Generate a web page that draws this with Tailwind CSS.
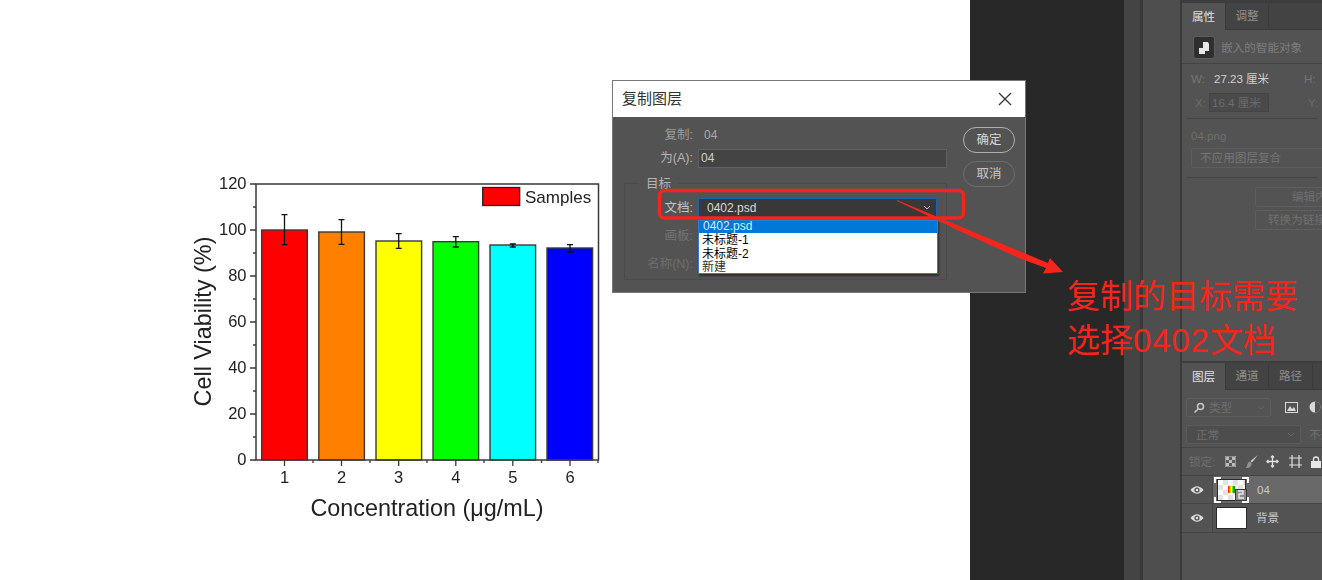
<!DOCTYPE html>
<html lang="zh">
<head>
<meta charset="utf-8">
<script src="https://cdn.jsdelivr.net/npm/@tailwindcss/browser@4"></script>
<title>复制图层</title>
</head>
<body class="m-0 bg-white">
<div class="relative flex w-[1322px] h-[580px] overflow-hidden font-['Liberation_Sans','Noto_Sans_CJK_SC',sans-serif] text-[11.6px]">

  <!-- document canvas with the chart -->
  <div class="w-[970px] h-full bg-white shrink-0">
    <svg width="970" height="580" viewBox="0 0 970 580" class="block blur-[0.4px]" font-family="Liberation Sans, Arial, sans-serif" fill="#222">
      <g stroke="#3a3a3a" stroke-width="1.4">
        <rect x="261.7" y="230" width="45.6" height="230" fill="#ff0000"/>
        <rect x="318.8" y="232" width="45.6" height="228" fill="#ff8000"/>
        <rect x="376" y="241" width="45.6" height="219" fill="#ffff00"/>
        <rect x="433" y="241.7" width="45.6" height="218.3" fill="#00ff00"/>
        <rect x="490" y="245" width="45.6" height="215" fill="#00ffff"/>
        <rect x="547" y="248" width="45.6" height="212" fill="#0000ff"/>
      </g>
      <g stroke="#111" stroke-width="1.3" fill="none">
        <path d="M284.5 214.7V244.7M281.5 214.7H287.5M281.5 244.7H287.5"/>
        <path d="M341.5 219.7V244.3M338.5 219.7H344.5M338.5 244.3H344.5"/>
        <path d="M398.7 233.7V248.3M395.7 233.7H401.7M395.7 248.3H401.7"/>
        <path d="M455.8 236.7V247M452.8 236.7H458.8M452.8 247H458.8"/>
        <path d="M512.8 244V247M509.8 244H515.8M509.8 247H515.8"/>
        <path d="M570 244.7V252M567 244.7H573M567 252H573"/>
      </g>
      <rect x="256" y="184" width="342.5" height="276" fill="none" stroke="#3a3a3a" stroke-width="1.5"/>
      <path d="M250 184H256M250 230H256M250 276H256M250 322H256M250 368H256M250 414H256M250 460H256M253 207H256M253 253H256M253 299H256M253 345H256M253 391H256M253 437H256" stroke="#3a3a3a" stroke-width="1.3" fill="none"/>
      <path d="M284.5 460V466M341.5 460V466M398.7 460V466M455.8 460V466M512.8 460V466M570 460V466M313 460V463M370 460V463M427 460V463M484 460V463M541.5 460V463M598 460V463" stroke="#3a3a3a" stroke-width="1.3" fill="none"/>
      <g font-size="16.5" text-anchor="end">
        <text x="246.5" y="188.5">120</text>
        <text x="246.5" y="234.5">100</text>
        <text x="246.5" y="280.5">80</text>
        <text x="246.5" y="326.5">60</text>
        <text x="246.5" y="372.5">40</text>
        <text x="246.5" y="418.5">20</text>
        <text x="246.5" y="464.5">0</text>
      </g>
      <g font-size="16.5" text-anchor="middle">
        <text x="284.5" y="483">1</text>
        <text x="341.5" y="483">2</text>
        <text x="398.7" y="483">3</text>
        <text x="455.8" y="483">4</text>
        <text x="512.8" y="483">5</text>
        <text x="570" y="483">6</text>
      </g>
      <rect x="482.7" y="187.5" width="37" height="18" fill="#ff0000" stroke="#222" stroke-width="1.3"/>
      <text x="525" y="202.5" font-size="17">Samples</text>
      <text x="427" y="516" font-size="23.4" text-anchor="middle">Concentration (μg/mL)</text>
      <text transform="translate(211 321.5) rotate(-90)" font-size="23.4" text-anchor="middle">Cell Viability (%)</text>
    </svg>
  </div>

  <!-- Photoshop workspace -->
  <div class="w-[154px] h-full bg-[#282828] shrink-0"></div>
  <div class="w-[16px] h-full bg-[#444444] shrink-0"></div>
  <div class="w-[3px] h-full bg-[#393939] shrink-0"></div>
  <div class="w-[37px] h-full bg-[#4e4e4e] shrink-0"></div>
  <div class="w-[2px] h-full bg-[#3b3b3b] shrink-0"></div>

  <!-- right panels -->
  <div class="w-[140px] h-full shrink-0 bg-[#535353] flex flex-col text-[#8f8f8f] overflow-hidden">
    <div class="h-[3px] bg-[#3d3d3d] shrink-0"></div>
    <div class="flex h-[27px] bg-[#434343] shrink-0 border-b border-[#3a3a3a]">
      <div class="w-[44px] h-[27px] bg-[#535353] text-[#e0e0e0] flex items-center justify-center border-r border-[#3a3a3a]">属性</div>
      <div class="w-[43px] flex items-center justify-center border-r border-[#3a3a3a]">调整</div>
    </div>
    <div class="h-[34px] flex items-center gap-[6px] pl-[11px] pt-[2px] border-b border-[#444] shrink-0">
      <div class="w-[22px] h-[23px] bg-[#2f2f2f] border border-[#5e5e5e] rounded-[3px] flex items-center justify-center">
        <svg width="12" height="14" viewBox="0 0 12 14"><path d="M5 1H10L11 3V10H7V7H5Z" fill="#e8e8e8"/><rect x="1" y="7" width="6" height="6" fill="#e8e8e8"/></svg>
      </div>
      <span class="text-[#7d7d7d]">嵌入的智能对象</span>
    </div>
    <div class="h-[55px] border-b border-[#444] shrink-0 mx-[4px]">
      <div class="flex items-center h-[29px] pl-[5px] whitespace-nowrap">
        <span class="w-[23px] text-[#757575]">W:</span><span class="text-[#d0d0d0] w-[32px]">27.23</span><span class="text-[#d0d0d0] w-[58px]">厘米</span><span class="text-[#757575]">H:</span>
      </div>
      <div class="flex items-center h-[19px] pl-[9px] gap-[3px] whitespace-nowrap">
        <span class="text-[#6c6c6c] w-[13px]">X:</span><span class="w-[60px] h-[19px] bg-[#4a4a4a] border border-[#444] text-[#6c6c6c] leading-[17px] pl-[2px] shrink-0">16.4 厘米</span><span class="ml-[36px] text-[#6c6c6c]">Y:</span>
      </div>
    </div>
    <div class="h-[59px] border-b border-[#444] shrink-0 mx-[4px]">
      <div class="h-[29px] pt-[10px] pl-[5px] text-[#6e6e6e] leading-[14px]">04.png</div>
      <div class="h-[20px] ml-[5px] -mr-[20px] border border-[#5e5e5e] rounded-[2px] pl-[8px] leading-[18px] text-[#767676] whitespace-nowrap">不应用图层复合</div>
    </div>
    <div class="h-[183px] shrink-0 pl-[73px] pt-[9px] flex flex-col gap-[3px] whitespace-nowrap text-[#6f6f6f]">
      <div class="h-[20px] w-[120px] border border-[#5e5e5e] rounded-[2px] pl-[36px] leading-[18px]">编辑内容</div>
      <div class="h-[20px] w-[120px] border border-[#5e5e5e] rounded-[2px] pl-[12px] leading-[18px]">转换为链接对象</div>
    </div>
    <div class="h-[2px] bg-[#3d3d3d] shrink-0"></div>
    <div class="flex h-[27px] bg-[#434343] shrink-0 border-b border-[#3a3a3a]">
      <div class="w-[44px] h-[27px] bg-[#535353] text-[#e0e0e0] flex items-center justify-center border-r border-[#3a3a3a]">图层</div>
      <div class="w-[43px] flex items-center justify-center border-r border-[#3a3a3a]">通道</div>
      <div class="w-[44px] flex items-center justify-center border-r border-[#3a3a3a]">路径</div>
    </div>
    <div class="h-[31px] flex items-start pt-[8px] pl-[4px] shrink-0">
      <div class="w-[85px] h-[19px] border border-[#5e5e5e] rounded-[3px] flex items-center pl-[6px] gap-[4px] text-[#6f6f6f] relative">
        <svg width="12" height="12" viewBox="0 0 12 12" fill="none" stroke="#c8c8c8" stroke-width="1.5"><circle cx="7.5" cy="4.5" r="3"/><path d="M5.3 6.7L1.5 10.5"/></svg>
        <span>类型</span>
        <svg class="absolute right-[5px] top-[6px]" width="8" height="6" viewBox="0 0 8 6" fill="none" stroke="#666"><path d="M1 1L4 4L7 1"/></svg>
      </div>
      <svg class="ml-[14px] mt-[4px] shrink-0" width="13" height="11" viewBox="0 0 13 11"><rect x=".5" y=".5" width="12" height="10" fill="none" stroke="#d8d8d8"/><path d="M2 9L5 4L7 7L9 5L11 9Z" fill="#d8d8d8"/></svg>
      <svg class="ml-[11px] mt-[3px] shrink-0" width="12" height="12" viewBox="0 0 12 12"><circle cx="6" cy="6" r="5.5" fill="#d8d8d8"/><path d="M6 .5A5.5 5.5 0 0 1 6 11.5Z" fill="#535353"/></svg>
    </div>
    <div class="h-[27px] border-b border-[#444] shrink-0 flex items-start pt-[4px] pl-[4px] text-[#6f6f6f] whitespace-nowrap">
      <div class="w-[115px] h-[19px] bg-[#4d4d4d] border border-[#5b5b5b] rounded-[2px] pl-[9px] leading-[17px] relative shrink-0">正常
        <svg class="absolute right-[5px] top-[6px]" width="8" height="6" viewBox="0 0 8 6" fill="none" stroke="#666"><path d="M1 1L4 4L7 1"/></svg>
      </div>
      <span class="ml-[8px] leading-[19px]">不透明度</span>
    </div>
    <div class="h-[28px] border-b border-[#444] shrink-0 flex items-center pl-[7px] text-[#6f6f6f] whitespace-nowrap">
      <span class="w-[36px] shrink-0">锁定:</span>
      <svg class="shrink-0" width="11" height="11" viewBox="0 0 11 11"><rect width="11" height="11" fill="#5a5a5a" stroke="#c4c4c4"/><path d="M1 1H4V4H1ZM7 1H10V4H7ZM4 4H7V7H4ZM1 7H4V10H1ZM7 7H10V10H7Z" fill="#bdbdbd"/></svg>
      <svg class="ml-[9px] shrink-0" width="13" height="13" viewBox="0 0 13 13"><path d="M13 0L5.5 6L7 7.5Z" fill="#d0d0d0"/><path d="M5 6.5Q2.5 7 2.5 9.5Q2 11.5 .5 13Q4.5 13 5.5 11.5Q7 10 6.5 8Z" fill="#929292"/></svg>
      <svg class="ml-[8px] shrink-0" width="13" height="13" viewBox="0 0 13 13" fill="none" stroke="#e0e0e0" stroke-width="1.4"><path d="M6.5 1V12M1 6.5H12"/><path d="M5 2.5L6.5 1L8 2.5M5 10.5L6.5 12L8 10.5M2.5 5L1 6.5L2.5 8M10.5 5L12 6.5L10.5 8"/></svg>
      <svg class="ml-[10px] shrink-0" width="13" height="13" viewBox="0 0 13 13" fill="none" stroke="#e0e0e0" stroke-width="1.2"><path d="M0 3H13M3 0V13M0 10H13M10 0V13"/></svg>
      <svg class="ml-[9px] shrink-0" width="10" height="12" viewBox="0 0 10 12"><path d="M2.5 5V3.5A2.5 2.5 0 0 1 7.5 3.5V5" fill="none" stroke="#e8e8e8" stroke-width="1.3"/><rect y="5" width="10" height="7" fill="#e8e8e8"/></svg>
    </div>
    <div class="h-[28px] flex shrink-0 border-b border-[#454545]">
      <div class="w-[31px] flex items-center justify-center border-r border-[#464646] shrink-0">
        <svg width="14" height="10" viewBox="0 0 14 10"><path d="M.5 5Q7 -2.5 13.5 5Q7 12.5 .5 5Z" fill="#dcdcdc"/><circle cx="7" cy="5" r="2.6" fill="#535353"/><circle cx="7" cy="5" r="1.3" fill="#dcdcdc"/></svg>
      </div>
      <div class="flex-1 bg-[#696969] flex items-center pl-[1px] gap-[8px]">
        <!-- selected smart-object thumbnail with white corner brackets -->
        <div class="relative w-[35px] h-[26px] shrink-0">
          <div class="absolute left-0 top-0 w-[7px] h-[6px] border-l-2 border-t-2 border-white"></div>
          <div class="absolute right-0 top-0 w-[7px] h-[6px] border-r-2 border-t-2 border-white"></div>
          <div class="absolute left-0 bottom-0 w-[7px] h-[6px] border-l-2 border-b-2 border-white"></div>
          <div class="absolute right-0 bottom-0 w-[7px] h-[6px] border-r-2 border-b-2 border-white"></div>
          <div class="absolute left-[3px] top-[2px] w-[29px] h-[22px] bg-[repeating-conic-gradient(#e2e2e2_0_25%,#ffffff_0_50%)] bg-[length:10px_10px] border-[1.5px] border-[#2a2a2a]">
            <div class="absolute left-[10px] top-[6px] w-[7px] h-[7px] bg-[linear-gradient(90deg,#f00,#fa0,#ff0,#0c0,#080)]"></div>
          </div>
          <div class="absolute left-[21px] top-[12px] w-[12px] h-[12px] bg-[#8a8a8a] border border-[#3a3a3a] flex items-center justify-center">
            <svg width="8" height="9" viewBox="0 0 8 9" fill="none" stroke="#eee" stroke-width="1.3"><path d="M1 1H6V4H2V8H7"/></svg>
          </div>
        </div>
        <span class="text-[#c8c8c8]">04</span>
      </div>
    </div>
    <div class="h-[29px] flex shrink-0 border-b border-[#454545]">
      <div class="w-[31px] flex items-center justify-center border-r border-[#464646] shrink-0">
        <svg width="14" height="10" viewBox="0 0 14 10"><path d="M.5 5Q7 -2.5 13.5 5Q7 12.5 .5 5Z" fill="#dcdcdc"/><circle cx="7" cy="5" r="2.6" fill="#535353"/><circle cx="7" cy="5" r="1.3" fill="#dcdcdc"/></svg>
      </div>
      <div class="flex-1 flex items-center pl-[3px] gap-[9px]">
        <div class="w-[31px] h-[22px] bg-white border border-[#2a2a2a] shrink-0"></div>
        <span class="text-[#c8c8c8]">背景</span>
      </div>
    </div>
  </div>

  <!-- dialog window -->
  <div class="absolute left-[612px] top-[80px] w-[414px] h-[213px] bg-[#535353] border border-[#777] flex flex-col">
    <div class="h-[36px] bg-white shrink-0 flex items-center justify-between pl-[9px] pr-[13px] text-[15px] text-[#333]">
      <span>复制图层</span>
      <svg width="14" height="14" viewBox="0 0 14 14" fill="none" stroke="#333" stroke-width="1.3"><path d="M1 1L13 13M13 1L1 13"/></svg>
    </div>
    <div class="flex-1 flex text-[12.5px] text-[#b5b5b5]">
      <div class="w-[335px] ml-[11px] shrink-0">
        <div class="flex items-center h-[20px] mt-[8px]">
          <span class="w-[69px] text-right text-[#9c9c9c]">复制:</span><span class="ml-[11px] text-[#a9a9a9] text-[12px]">04</span>
        </div>
        <div class="flex items-center h-[19px] mt-[4px]">
          <span class="w-[69px] text-right">为(A):</span>
          <span class="ml-[5px] w-[249px] h-[19px] bg-[#444444] border border-[#606060] pl-[2px] leading-[17px] text-[#d0d0d0] text-[12px]">04</span>
        </div>
        <div class="relative mt-[15px] h-[97px] w-[323px] border border-[#4a4a4a] rounded-[1px] pt-[14px]">
          <span class="absolute left-[14px] -top-[8px] px-[7px] bg-[#535353] leading-[16px] text-[#b5b5b5]">目标</span>
          <div class="flex items-center h-[20px]">
            <span class="w-[68px] text-right text-[#c4c4c4]">文档:</span>
            <div class="ml-[5px] w-[239px] h-[20px] bg-[#383838] border border-[#1e62b4] rounded-[1px] flex items-center justify-between pl-[8px] pr-[5px] text-[#d8d8d8]">
              <span class="text-[12px]">0402.psd</span>
              <svg width="8" height="6" viewBox="0 0 8 6" fill="none" stroke="#bbb"><path d="M1 1L4 4L7 1"/></svg>
            </div>
          </div>
          <div class="flex items-center h-[20px] mt-[8px] text-[#747474]"><span class="w-[68px] text-right">画板:</span></div>
          <div class="flex items-center h-[20px] mt-[8px] text-[#6e6e6e]"><span class="w-[68px] text-right">名称(N):</span></div>
          <!-- open dropdown list -->
          <div class="absolute left-[73px] top-[36px] w-[240px] h-[54px] bg-white border border-[#2f7fd0] shadow-[1px_2px_2px_rgba(0,0,0,0.45)] flex flex-col text-[12px] leading-[14px] text-black overflow-hidden">
            <div class="h-[12px] bg-[#0078d7] text-[#d8e8f8] pl-[4px] leading-[11px] shrink-0">0402.psd</div>
            <div class="pl-[3px] h-[14px] shrink-0">未标题-1</div>
            <div class="pl-[3px] h-[14px] shrink-0">未标题-2</div>
            <div class="pl-[3px] h-[12px] shrink-0 text-[#333] leading-[12px]">新建</div>
          </div>
        </div>
      </div>
      <div class="flex flex-col gap-[8px] ml-[4px] pt-[10px]">
        <div class="w-[52px] h-[26px] border-[1.5px] border-[#b0b0b0] rounded-full flex items-center justify-center text-[#d8d8d8]">确定</div>
        <div class="w-[52px] h-[26px] border-[1.5px] border-[#6e6e6e] rounded-full flex items-center justify-center text-[#c8c8c8]">取消</div>
      </div>
    </div>
  </div>

  <!-- red annotation drawn on top -->
  <svg class="absolute left-0 top-0 pointer-events-none" width="1322" height="580" viewBox="0 0 1322 580">
    <rect x="659.5" y="190.5" width="304" height="27.5" rx="5" fill="none" stroke="#f5251c" stroke-width="3.5"/>
    <path d="M897 200L1048 263L1050 258L1063 272L1043 273.5L1046 268L1020 258.5L965 233.5L897 201Z" fill="#f5251c"/>
  </svg>
  <div class="absolute left-[1067px] top-[275px] text-[33px] leading-[44px] text-[#f5251c] whitespace-nowrap">复制的目标需要<br>选择<span class="tracking-[0.8px]">0402</span>文档</div>
</div>
</body>
</html>
